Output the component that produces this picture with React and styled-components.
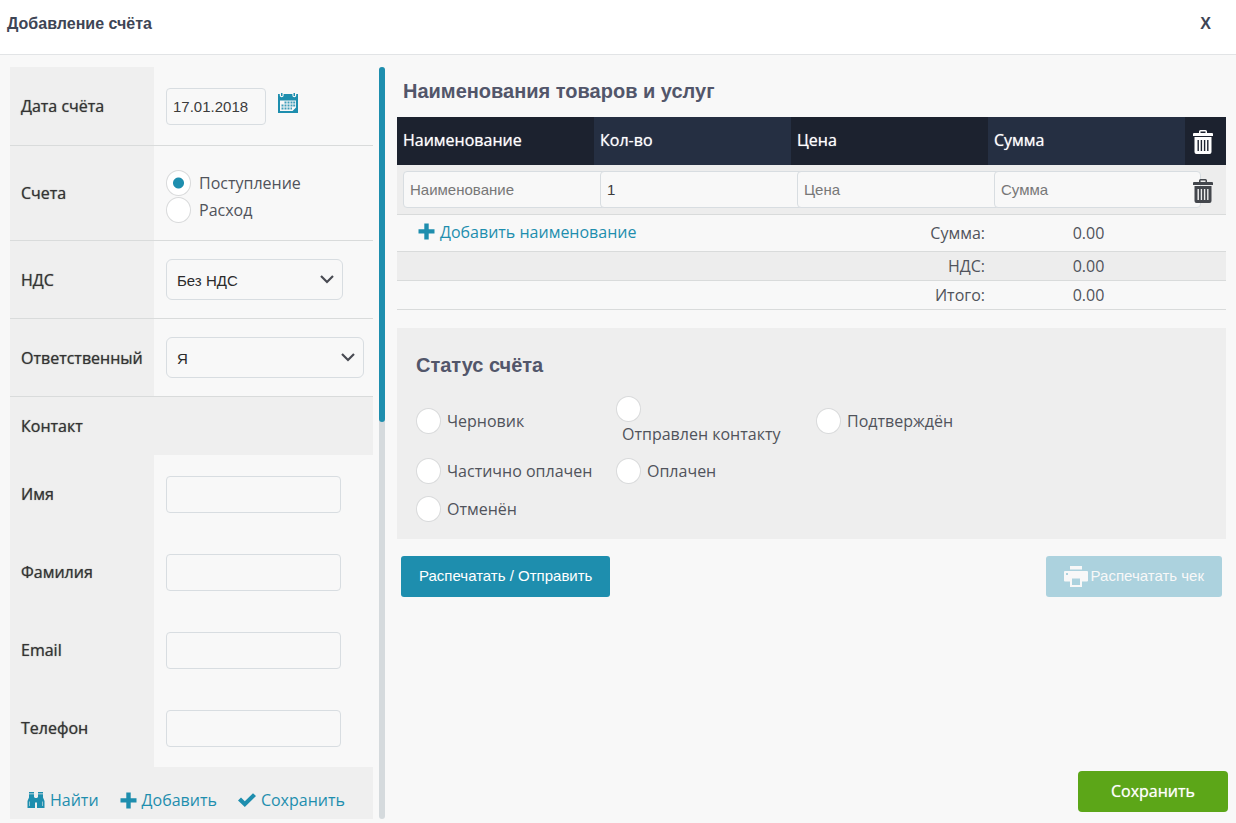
import styled, { createGlobalStyle } from "styled-components";

const accent = "#1e8eae";
const line = "#d9dbdb";
const sans = `"Liberation Sans", Arial, sans-serif`;
const openSans = `"Open Sans", "Noto Sans", sans-serif`;

const GlobalStyle = createGlobalStyle`
  * {
    box-sizing: border-box;
  }

  body {
    margin: 0;
    background: #f8f8f8;
    color: #50535b;
    font-family: ${openSans};
    font-size: 16px;
    line-height: 24px;
  }
`;

const Page = styled.div`
  display: flex;
  flex-direction: column;
  min-height: 100vh;
`;

const Header = styled.header`
  display: flex;
  align-items: flex-start;
  justify-content: space-between;
  height: 55px;
  padding: 12px 25px 0 7px;
  background: #fff;
  border-bottom: 1px solid #e2e4e6;
  color: #3e4555;

  h1 {
    margin: 0;
    font: bold 16px/24px ${sans};
  }
`;

const CloseButton = styled.button`
  padding: 0;
  border: 0;
  background: none;
  color: inherit;
  font: bold 16px/24px ${sans};
  cursor: pointer;
`;

const Body = styled.div`
  display: flex;
  flex: 1;
  padding: 12px 0 4px 10px;
`;

const Sidebar = styled.form`
  flex: 0 0 363px;
  background: linear-gradient(to right, #efefef 144px, #f8f8f8 144px);
`;

const ScrollTrack = styled.div`
  flex: 0 0 6px;
  margin: 0 12px 0 6px;
  border-radius: 3px;
  background: #d5dadd;
`;

const ScrollThumb = styled.div`
  height: 355px;
  border-radius: 3px;
  background: ${accent};
`;

const Row = styled.div`
  display: grid;
  grid-template-columns: 144px 1fr;
  align-items: center;
  min-height: ${({ $height }) => $height || 78}px;
  border-bottom: ${({ $lined }) => ($lined ? `1px solid ${line}` : "0")};
`;

const RowLabel = styled.label`
  padding-left: 11px;
  color: #333;
  text-shadow: 0 0 1px rgba(51, 51, 51, 0.7);
`;

const RowContent = styled.div`
  display: flex;
  align-items: center;
  gap: 12px;
  padding-left: 12px;
`;

const SectionTitle = styled.h3`
  margin: 0;
  padding: 17px 11px;
  background: #efefef;
  color: #333;
  font-size: 16px;
  font-weight: normal;
  line-height: 24px;
  text-shadow: 0 0 1px rgba(51, 51, 51, 0.7);
`;

const TextInput = styled.input`
  width: ${({ $short }) => ($short ? 100 : 175)}px;
  height: 37px;
  padding: 0 6px;
  border: 1px solid #d8dde1;
  border-radius: 4px;
  background: #f8f8f8;
  color: #3c3c3c;
  font: 15px ${sans};

  &::placeholder {
    color: #777;
    opacity: 1;
  }
`;

const IconButton = styled.button`
  display: block;
  padding: 0;
  border: 0;
  background: none;
  color: ${({ $color }) => $color || accent};
  cursor: pointer;

  svg {
    display: block;
  }
`;

const CalendarButton = styled(IconButton)`
  padding-bottom: 6px;
`;

const SelectWrapper = styled.div`
  position: relative;
  width: ${({ $wide }) => ($wide ? 198 : 177)}px;

  select {
    width: 100%;
    height: 41px;
    padding: 2px 32px 0 10px;
    appearance: none;
    border: 1px solid #d8dde1;
    border-radius: 6px;
    background: #f8f8f8;
    color: #2b2b2b;
    font: 15px ${sans};
  }

  svg {
    position: absolute;
    top: 15px;
    right: 8px;
    pointer-events: none;
  }
`;

const RadioStack = styled.div`
  display: flex;
  flex-direction: column;
  gap: 1px;
  padding-top: 6px;
`;

const RadioLabel = styled.label`
  display: flex;
  flex-wrap: wrap;
  align-items: center;
  align-content: center;
  column-gap: ${({ $gap }) => $gap || 0}px;
  cursor: pointer;

  input {
    flex: none;
    width: 25px;
    height: 26px;
    margin: 0;
    appearance: none;
    border: 1px solid #d9dadb;
    border-radius: 50%;
    background: #fff;
  }

  input:checked {
    background: radial-gradient(circle, ${accent} 5px, #fff 6px);
  }
`;

const ContactActions = styled.div`
  display: flex;
  align-items: center;
  gap: 21px;
  height: 52px;
  padding: 14px 0 0 17px;
  background: #efefef;
`;

const ActionLink = styled.a`
  display: inline-flex;
  align-items: center;
  gap: 5px;
  color: ${accent};
  text-decoration: none;
`;

const Main = styled.main`
  display: flex;
  flex: 1;
  flex-direction: column;
  min-width: 0;
  padding-right: 10px;
`;

const Title = styled.h2`
  margin: 0;
  padding: ${({ $flush }) => ($flush ? "0" : "12px 6px 14px")};
  color: #52566a;
  font: bold 20px/24px ${sans};
`;

const Table = styled.table`
  width: 100%;
  table-layout: fixed;
  border-collapse: separate;
  border-spacing: 0;

  th,
  td {
    padding: 0;
    text-align: left;
  }

  th {
    height: 48px;
    padding: 0 6px 2px;
    background: #252f42;
    color: #fff;
    font-weight: normal;
    text-shadow: 0 0 1px rgba(255, 255, 255, 0.7);
  }

  th:nth-child(odd) {
    background: #1c222f;
  }

  th:last-child {
    padding: 2px 0 0 8px;
  }

  tbody td {
    padding: 6px 0 6px 6px;
    border-bottom: 1px solid ${line};
    background: #ededed;
  }

  tbody td:last-child {
    padding: 2px 0 0 8px;
  }

  tbody input {
    display: inline-block;
    width: calc(100% + 16px);
    vertical-align: top;
  }

  tfoot td {
    height: 29px;
    border-bottom: 1px solid ${line};
    line-height: 20px;
  }

  tfoot tr:first-child td {
    height: 37px;
  }

  tfoot tr:nth-child(2) td {
    background: #ededed;
  }
`;

const TrashColumn = styled.col`
  width: 41px;
`;

const AddCell = styled.td`
  && {
    padding-left: 21px;
  }
`;

const TotalName = styled.td`
  && {
    padding-right: 3px;
    text-align: right;
  }
`;

const TotalValue = styled.td`
  && {
    padding-left: 4px;
    text-align: center;
  }
`;

const StatusPanel = styled.section`
  margin-top: 18px;
  padding: 25px 19px 17px;
  background: #eee;
`;

const StatusGrid = styled.div`
  display: grid;
  grid-template-columns: repeat(3, 200px);
  gap: 12px 0;
  margin-top: 19px;

  label {
    padding-right: 16px;
  }

  span {
    padding-left: 6px;
  }

  label:last-child {
    grid-column: 1;
  }
`;

const Buttons = styled.div`
  display: flex;
  justify-content: space-between;
  padding: 17px 4px;
`;

const Button = styled.button`
  display: inline-flex;
  align-items: center;
  gap: 3px;
  height: 41px;
  padding: 0 18px 3px;
  border: 0;
  border-radius: 3px;
  background: ${accent};
  color: #fff;
  font: 15px ${sans};
  cursor: pointer;

  &:disabled {
    background: #acd2de;
    color: #f8f8f8;
    cursor: default;
  }

  svg {
    margin-top: 3px;
  }
`;

const SaveButton = styled.button`
  align-self: flex-end;
  width: 150px;
  height: 41px;
  margin: auto -2px 7px 0;
  padding: 0 0 2px;
  border: 0;
  border-radius: 4px;
  background: #5ca618;
  color: #fff;
  font: 16px ${openSans};
  text-shadow: 0 0 1px rgba(255, 255, 255, 0.7);
  cursor: pointer;
`;

const CalendarIcon = () => (
  <svg width="20" height="20" viewBox="0 0 20 20" fill="currentColor">
    <path
      fillRule="evenodd"
      d="M0 1h1.800v1.500q0 1.700 1.900 1.700t1.900-1.700V1h8.800v1.500q0 1.700 1.900 1.700t1.900-1.700V1H20v19H0zM2 7.500V18h12.500l3.500-3.500v-7z"
    />
    <path d="M3 0h1.500v3H3zM15.500 0H17v3h-1.500z" />
    <path
      opacity=".85"
      d="M6.500 8.500h2v2h-2zM9.500 8.500h2v2h-2zM12.500 8.500h2v2h-2zM15.200 8.500h2v2h-2zM3.500 11.500h2v2h-2zM6.500 11.500h2v2h-2zM9.500 11.500h2v2h-2zM12.500 11.500h2v2h-2zM15.200 11.500h2v2h-2zM3.500 14.500h2v2h-2zM6.500 14.500h2v2h-2zM9.500 14.500h2v2h-2zM12.500 14.500h1.500v2h-1.500z"
    />
  </svg>
);

const ChevronIcon = () => (
  <svg width="16" height="11" viewBox="0 0 16 11" fill="none">
    <path d="M2 2l6 6 6-6" stroke="#484a52" strokeWidth="2.200" />
  </svg>
);

const BinocularsIcon = () => (
  <svg width="18" height="17" viewBox="0 0 18 17" fill="currentColor">
    <path d="M2 0h5v1.500H2zM11 0h5v1.500h-5zM2 2.300h5v3.200h1V16H.5V9L2 5.500zM11 2.300h5v3.200L17.500 9v7H10V5.500h1zM8 6h2v4.500H8z" />
    <path
      d="M2.500 9.500V14M15.500 9.500V14"
      stroke="#efefef"
      strokeOpacity=".7"
      strokeWidth=".8"
    />
  </svg>
);

const PlusIcon = () => (
  <svg width="17" height="17" viewBox="0 0 17 17" fill="currentColor">
    <path d="M6.300.5h4.400v5.800h5.800v4.200h-5.800v6H6.300v-6H.5V6.300h5.800z" />
  </svg>
);

const CheckIcon = () => (
  <svg width="18" height="14" viewBox="0 0 18 14" fill="currentColor">
    <path d="M0 7.500L3 4.500l3.800 3.800L15 .2l3 2.800L6.800 14z" />
  </svg>
);

const TrashIcon = () => (
  <svg width="20" height="24" viewBox="0 0 20 24" fill="currentColor">
    <path
      fillRule="evenodd"
      d="M6 3V1.500Q6 0 7.500 0h5Q14 0 14 1.500V3h5q1 0 1 1v2H0V4q0-1 1-1zM7.500 3h5V1.500h-5z"
    />
    <path
      fillRule="evenodd"
      d="M1.500 7h17v15q0 2-2 2h-13q-2 0-2-2zM4.500 10v11h1.400V10zM7.700 10v11h1.400V10zM10.900 10v11h1.400V10zM14.100 10v11h1.400V10z"
    />
  </svg>
);

const PrinterIcon = () => (
  <svg width="24" height="21" viewBox="0 0 24 21" fill="currentColor">
    <path d="M6 0h12v3.500H6z" />
    <path
      fillRule="evenodd"
      d="M1 5h22q1 0 1 1v8.500q0 1-1 1h-5V21H6v-5.500H1q-1 0-1-1V6q0-1 1-1zM8 12.500V19h8v-6.500zM2 7v2h2V7z"
    />
  </svg>
);

const contactFields = [
  { id: "firstName", label: "Имя" },
  { id: "lastName", label: "Фамилия" },
  { id: "email", label: "Email" },
  { id: "phone", label: "Телефон" },
];

const columns = ["Наименование", "Кол-во", "Цена", "Сумма"];

const statuses = [
  "Черновик",
  "Отправлен контакту",
  "Подтверждён",
  "Частично оплачен",
  "Оплачен",
  "Отменён",
];

const InvoiceForm = () => (
  <Sidebar>
    <Row $lined $height={79}>
      <RowLabel htmlFor="date">Дата счёта</RowLabel>
      <RowContent>
        <TextInput id="date" $short defaultValue="17.01.2018" />
        <CalendarButton type="button" aria-label="Календарь">
          <CalendarIcon />
        </CalendarButton>
      </RowContent>
    </Row>
    <Row $lined $height={95}>
      <RowLabel as="span" id="kind">
        Счета
      </RowLabel>
      <RowContent>
        <RadioStack role="radiogroup" aria-labelledby="kind">
          <RadioLabel $gap={8}>
            <input type="radio" name="kind" defaultChecked />
            <span>Поступление</span>
          </RadioLabel>
          <RadioLabel $gap={8}>
            <input type="radio" name="kind" />
            <span>Расход</span>
          </RadioLabel>
        </RadioStack>
      </RowContent>
    </Row>
    <Row $lined>
      <RowLabel htmlFor="vat">НДС</RowLabel>
      <RowContent>
        <SelectWrapper>
          <select id="vat">
            <option>Без НДС</option>
          </select>
          <ChevronIcon />
        </SelectWrapper>
      </RowContent>
    </Row>
    <Row $lined>
      <RowLabel htmlFor="owner">Ответственный</RowLabel>
      <RowContent>
        <SelectWrapper $wide>
          <select id="owner">
            <option>Я</option>
          </select>
          <ChevronIcon />
        </SelectWrapper>
      </RowContent>
    </Row>
    <SectionTitle>Контакт</SectionTitle>
    {contactFields.map(({ id, label }) => (
      <Row key={id}>
        <RowLabel htmlFor={id}>{label}</RowLabel>
        <RowContent>
          <TextInput id={id} />
        </RowContent>
      </Row>
    ))}
    <ContactActions>
      <ActionLink href="#find">
        <BinocularsIcon />
        Найти
      </ActionLink>
      <ActionLink href="#add">
        <PlusIcon />
        Добавить
      </ActionLink>
      <ActionLink href="#save">
        <CheckIcon />
        Сохранить
      </ActionLink>
    </ContactActions>
  </Sidebar>
);

const ItemsTable = () => (
  <Table>
    <colgroup>
      {columns.map((name) => (
        <col key={name} />
      ))}
      <TrashColumn />
    </colgroup>
    <thead>
      <tr>
        {columns.map((name) => (
          <th key={name}>{name}</th>
        ))}
        <th>
          <IconButton type="button" aria-label="Удалить все" $color="#fff">
            <TrashIcon />
          </IconButton>
        </th>
      </tr>
    </thead>
    <tbody>
      <tr>
        {columns.map((name) => (
          <td key={name}>
            <TextInput
              aria-label={name}
              placeholder={name}
              defaultValue={name === "Кол-во" ? "1" : ""}
            />
          </td>
        ))}
        <td>
          <IconButton type="button" aria-label="Удалить" $color="#44474d">
            <TrashIcon />
          </IconButton>
        </td>
      </tr>
    </tbody>
    <tfoot>
      <tr>
        <AddCell colSpan={2}>
          <ActionLink href="#add-item">
            <PlusIcon />
            Добавить наименование
          </ActionLink>
        </AddCell>
        <TotalName>Сумма:</TotalName>
        <TotalValue>0.00</TotalValue>
        <td />
      </tr>
      <tr>
        <td colSpan={2} />
        <TotalName>НДС:</TotalName>
        <TotalValue>0.00</TotalValue>
        <td />
      </tr>
      <tr>
        <td colSpan={2} />
        <TotalName>Итого:</TotalName>
        <TotalValue>0.00</TotalValue>
        <td />
      </tr>
    </tfoot>
  </Table>
);

const App = () => (
  <Page>
    <GlobalStyle />
    <Header>
      <h1>Добавление счёта</h1>
      <CloseButton type="button">X</CloseButton>
    </Header>
    <Body>
      <InvoiceForm />
      <ScrollTrack>
        <ScrollThumb />
      </ScrollTrack>
      <Main>
        <Title>Наименования товаров и услуг</Title>
        <ItemsTable />
        <StatusPanel>
          <Title $flush>Статус счёта</Title>
          <StatusGrid>
            {statuses.map((status) => (
              <RadioLabel key={status}>
                <input type="radio" name="status" />
                <span>{status}</span>
              </RadioLabel>
            ))}
          </StatusGrid>
        </StatusPanel>
        <Buttons>
          <Button type="button">Распечатать / Отправить</Button>
          <Button type="button" disabled>
            <PrinterIcon />
            Распечатать чек
          </Button>
        </Buttons>
        <SaveButton type="button">Сохранить</SaveButton>
      </Main>
    </Body>
  </Page>
);

export default App;
